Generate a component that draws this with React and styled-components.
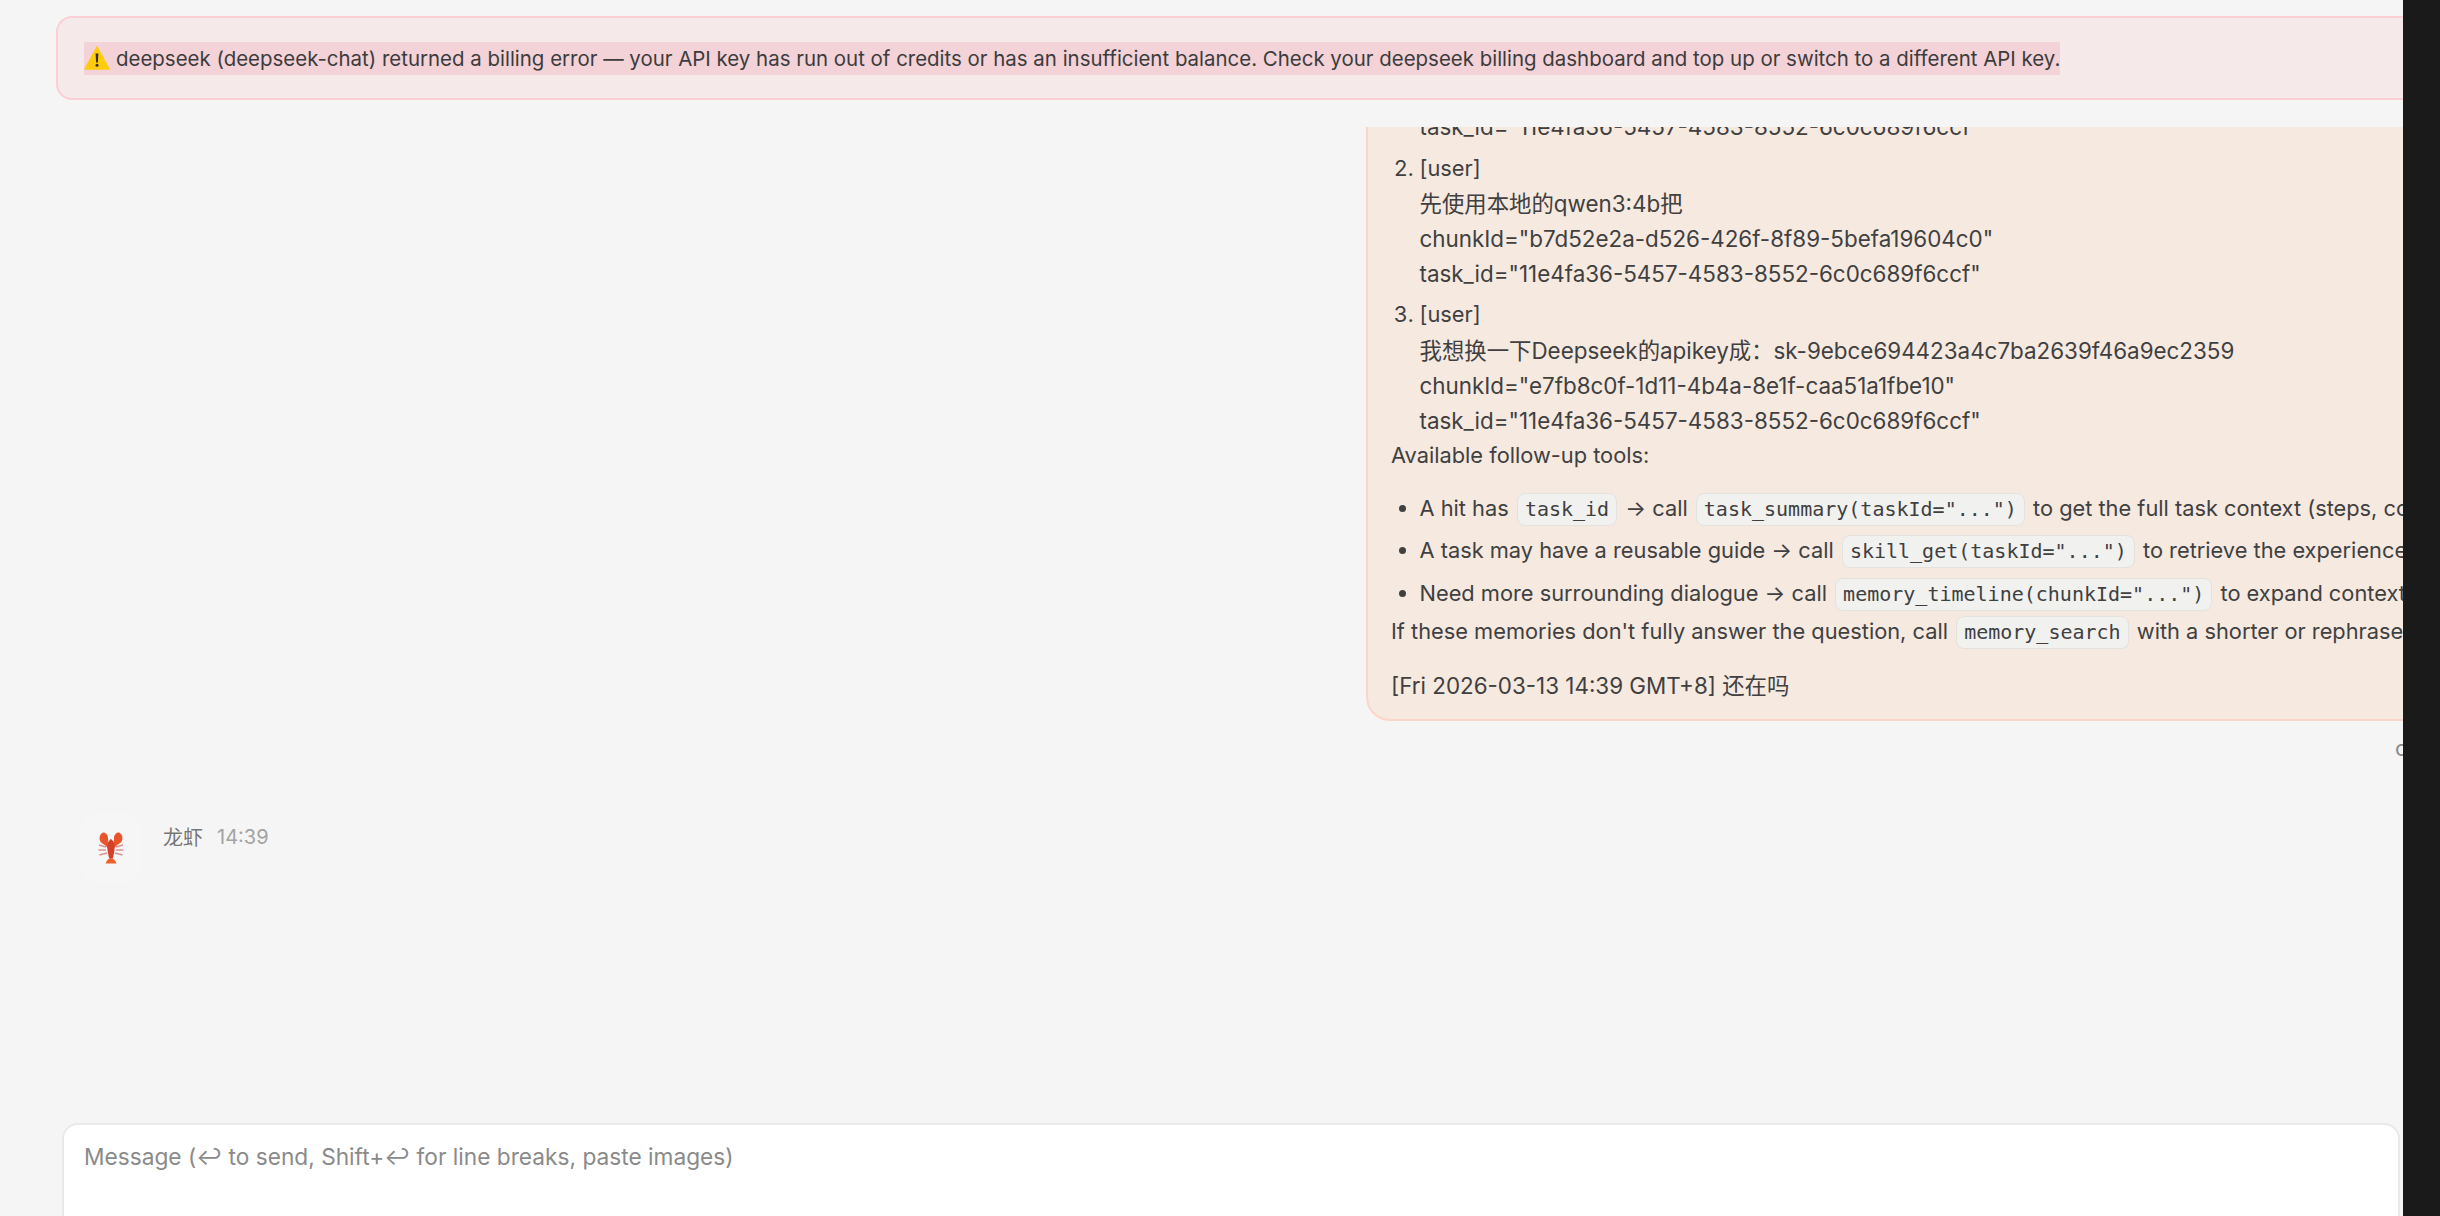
import React from "react";
import styled, { createGlobalStyle } from "styled-components";

const GlobalStyle = createGlobalStyle`
  html, body { margin: 0; padding: 0; height: 100%; background: #f5f5f5; }
  body { font-family: Inter, "Noto Sans CJK SC", sans-serif; overflow: hidden; }
`;

const Page = styled.div`
  display: flex;
  width: 2440px;
  height: 1216px;
  overflow: hidden;
`;

const Main = styled.main`
  width: 2403px;
  flex: none;
  display: flex;
  flex-direction: column;
  overflow: hidden;
  background: #f5f5f5;
`;

const Edge = styled.div`
  flex: 1;
  background: #1a1a1a;
`;

const Banner = styled.div`
  flex: none;
  width: 2400px;
  height: 84px;
  box-sizing: border-box;
  margin: 16px 0 27px 56px;
  padding-left: 26px;
  display: flex;
  align-items: center;
  background: #f6e9ea;
  border: 2px solid #fbcfd4;
  border-radius: 16px;
  font-size: 20.45px;
  color: #3c3c3c;
`;

const BannerText = styled.span`
  display: inline-flex;
  align-items: center;
  gap: 6px;
  height: 33px;
  background: #f3d2d8;
  white-space: nowrap;
`;

const Thread = styled.div`
  flex: none;
  height: 996px;
  display: flex;
  flex-direction: column;
  justify-content: flex-end;
  overflow: hidden;
  padding-bottom: 241px;
  box-sizing: border-box;
`;

const UserGroup = styled.div`
  margin-left: 1366px;
  width: 1100px;
  flex: none;
`;

const Bubble = styled.div`
  box-sizing: border-box;
  padding: 0 0 16px 23px;
  background: #f6e9e0;
  border: 2px solid #fbd5c9;
  border-top: none;
  border-right: none;
  border-radius: 0 0 0 24px;
  font-size: 21.8px;
  line-height: 35.2px;
  color: #404040;
  white-space: nowrap;
`;

const NumberedList = styled.ol`
  margin: 0;
  padding-left: 28.5px;
  li { margin-bottom: 6px; }
  li:last-child { margin-bottom: 0; }
`;

const Line = styled.div``;

const IdLine = styled.div`
  font-size: 22.4px;
`;

const BulletList = styled.ul`
  margin: 18px 0 2px;
  padding-left: 28.5px;
  li { margin-bottom: 5px; }
  li:first-child { margin-bottom: 6.5px; }
  li:nth-child(2) { margin-bottom: 8px; }
  li:last-child { margin-bottom: 0; }
`;

const Code = styled.code`
  display: inline-block;
  font-family: "DejaVu Sans Mono", "Liberation Mono", monospace;
  font-size: 20px;
  line-height: 31px;
  padding: 0 7px;
  margin: 0 2px;
  background: #f1f1f0;
  border: 1.5px solid #e3e2df;
  border-radius: 8px;
  color: #404040;
`;

const Stamp = styled.p`
  margin: 19px 0 0;
  font-size: 22.4px;
`;

const BubbleMeta = styled.div`
  margin: 14px 0 0 1029px;
  font-size: 22px;
  color: #8a8a8a;
  white-space: nowrap;
`;

const AssistantRow = styled.div`
  flex: none;
  margin: 53px 0 0 80px;
  display: flex;
  align-items: flex-start;
  gap: 21px;
`;

const Avatar = styled.div`
  width: 62px;
  height: 68px;
  flex: none;
  display: flex;
  align-items: center;
  justify-content: center;
  background: #f6f6f6;
  border-radius: 14px;
`;

const Sender = styled.div`
  display: flex;
  align-items: center;
  gap: 14px;
  margin-top: 8px;
  font-size: 20px;
`;

const Name = styled.span`
  color: #777;
`;

const Time = styled.span`
  color: #a3a3a3;
`;

const Composer = styled.textarea`
  flex: none;
  display: block;
  box-sizing: border-box;
  width: 2338px;
  height: 130px;
  margin-left: 62px;
  padding: 17px 20px;
  background: #fff;
  border: 2px solid #e9e9e9;
  border-radius: 16px;
  font-family: Inter, sans-serif;
  font-size: 22.7px;
  line-height: 29px;
  resize: none;
  outline: none;
  &::placeholder { color: #8a8a8a; opacity: 1; }
`;

const WarningIcon = () => (
  <svg width="26" height="24" viewBox="0 0 26 24" aria-hidden="true">
    <path d="M13 1 L25 23 H1 Z" fill="#ffcc0a" stroke="#ffcc0a" strokeWidth="1.5" strokeLinejoin="round" />
    <path d="M11.6 7.5 h2.8 l-.5 9 h-1.8 Z" fill="#33302a" />
    <circle cx="13" cy="19.3" r="1.5" fill="#33302a" />
  </svg>
);

const LobsterIcon = () => (
  <svg width="26" height="32" viewBox="0 0 26 32" aria-hidden="true">
    <g stroke="#c9423a" strokeWidth="1.6" fill="none" opacity="0.55">
      <path d="M8 15 L1 13 M8 18 L0.5 18 M9 21 L1.5 23 M18 15 L25 13 M18 18 L25.5 18 M17 21 L24.5 23" />
    </g>
    <path d="M5 0.5 C0.5 2.5 0.5 9.5 4.5 11.5 C6.5 12.8 8.5 14 9.5 16 L11.5 13 C10.5 11 10 9 10 6 C10 3 8 0.5 5 0.5 Z" fill="#e8552b" />
    <path d="M21 0.5 C25.5 2.5 25.5 9.5 21.5 11.5 C19.5 12.8 17.5 14 16.5 16 L14.5 13 C15.5 11 16 9 16 6 C16 3 18 0.5 21 0.5 Z" fill="#e8552b" />
    <path d="M13 7 C16.5 9.5 17 14 16.5 18 C16.2 21 15.2 24 15 26 H11 C10.8 24 9.8 21 9.5 18 C9 14 9.5 9.5 13 7 Z" fill="#d4402a" />
    <path d="M7.5 31.5 C8.8 28 11 26 13 26 C15 26 17.2 28 18.5 31.5 Z" fill="#ee5f2c" />
  </svg>
);

const App = () => (
  <Page>
    <GlobalStyle />
    <Main>
      <Banner>
        <BannerText>
          <WarningIcon />
          deepseek (deepseek-chat) returned a billing error — your API key has run out of credits or has an insufficient balance. Check your deepseek billing dashboard and top up or switch to a different API key.
        </BannerText>
      </Banner>
      <Thread>
        <UserGroup>
          <Bubble>
            <NumberedList>
              <li>
                [user]
                <Line>我想用deepseek</Line>
                <IdLine>chunkId="0a9c3b1e-7f42-4d18-9a63-2e5d8c1f7b04"</IdLine>
                <IdLine>task_id="11e4fa36-5457-4583-8552-6c0c689f6ccf"</IdLine>
              </li>
              <li>
                [user]
                <IdLine>先使用本地的qwen3:4b把</IdLine>
                <IdLine>chunkId="b7d52e2a-d526-426f-8f89-5befa19604c0"</IdLine>
                <IdLine>task_id="11e4fa36-5457-4583-8552-6c0c689f6ccf"</IdLine>
              </li>
              <li>
                [user]
                <IdLine>我想换一下Deepseek的apikey成：sk-9ebce694423a4c7ba2639f46a9ec2359</IdLine>
                <IdLine>chunkId="e7fb8c0f-1d11-4b4a-8e1f-caa51a1fbe10"</IdLine>
                <IdLine>task_id="11e4fa36-5457-4583-8552-6c0c689f6ccf"</IdLine>
              </li>
            </NumberedList>
            <Line>Available follow-up tools:</Line>
            <BulletList>
              <li>A hit has <Code>task_id</Code> → call <Code>task_summary(taskId="...")</Code> to get the full task context (steps, code, results)</li>
              <li>A task may have a reusable guide → call <Code>skill_get(taskId="...")</Code> to retrieve the experience guide</li>
              <li>Need more surrounding dialogue → call <Code>memory_timeline(chunkId="...")</Code> to expand context</li>
            </BulletList>
            <Line>If these memories don't fully answer the question, call <Code>memory_search</Code> with a shorter or rephrased query</Line>
            <Stamp>[Fri 2026-03-13 14:39 GMT+8] 还在吗</Stamp>
          </Bubble>
          <BubbleMeta>cc</BubbleMeta>
        </UserGroup>
        <AssistantRow>
          <Avatar><LobsterIcon /></Avatar>
          <Sender>
            <Name>龙虾</Name>
            <Time>14:39</Time>
          </Sender>
        </AssistantRow>
      </Thread>
      <Composer placeholder="Message (↩ to send, Shift+↩ for line breaks, paste images)" />
    </Main>
    <Edge />
  </Page>
);

export default App;
